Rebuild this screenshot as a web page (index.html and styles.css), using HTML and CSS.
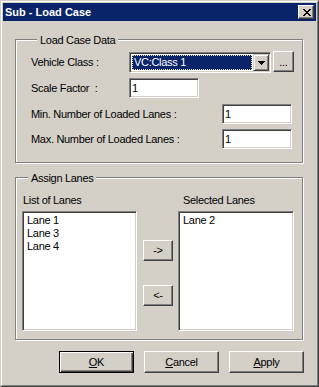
FILE: index.html
```html
<!DOCTYPE html>
<html>
<head>
<meta charset="utf-8">
<title>Sub - Load Case</title>
<link rel="stylesheet" href="styles.css">
</head>
<body>
<div class="window">
  <div class="frame">
    <div class="titlebar">
      <span class="title">Sub - Load Case</span>
      <span class="close">
        <svg width="8" height="7" viewBox="0 0 8 7" shape-rendering="crispEdges"><path fill="#000" d="M0 0h2v1h-2z M6 0h2v1h-2z M1 1h2v1h-2z M5 1h2v1h-2z M2 2h4v1h-4z M3 3h2v1h-2z M2 4h4v1h-4z M1 5h2v1h-2z M5 5h2v1h-2z M0 6h2v1h-2z M6 6h2v1h-2z"/></svg>
      </span>
    </div>
    <div class="content">
      <div class="group g1">
        <span class="legend">Load Case Data</span>
        <div class="row r1">
          <span class="lbl">Vehicle Class :</span>
          <div class="combo">
            <span class="combo-value"><span class="sel">VC:Class 1</span></span>
            <span class="combo-btn">
              <svg width="7" height="4" viewBox="0 0 7 4" shape-rendering="crispEdges"><path fill="#000" d="M0 0h7v1h-7z M1 1h5v1h-5z M2 2h3v1h-3z M3 3h1v1h-1z"/></svg>
            </span>
          </div>
          <span class="btn dots">...</span>
        </div>
        <div class="row r2">
          <span class="lbl">Scale Factor&nbsp;&nbsp;:</span>
          <span class="field">1</span>
        </div>
        <div class="row r3 wide">
          <span class="lbl">Min. Number of Loaded Lanes :</span>
          <span class="field">1</span>
        </div>
        <div class="row r4 wide">
          <span class="lbl">Max. Number of Loaded Lanes :</span>
          <span class="field">1</span>
        </div>
      </div>
      <div class="group g2">
        <span class="legend">Assign Lanes</span>
        <div class="lanes">
          <span class="cap cap-left">List of Lanes</span>
          <span></span>
          <span class="cap cap-right">Selected Lanes</span>
          <div class="listbox">
            <div class="item">Lane 1</div>
            <div class="item">Lane 3</div>
            <div class="item">Lane 4</div>
          </div>
          <div class="movers">
            <span class="btn mv">-&gt;</span>
            <span class="btn mv">&lt;-</span>
          </div>
          <div class="listbox">
            <div class="item">Lane 2</div>
          </div>
        </div>
      </div>
      <div class="buttons">
        <span class="btn act default"><u>O</u>K</span>
        <span class="btn act"><u>C</u>ancel</span>
        <span class="btn act"><u>A</u>pply</span>
      </div>
    </div>
  </div>
</div>
</body>
</html>
```
FILE: styles.css
```css
* { box-sizing: border-box; }
html, body { margin: 0; padding: 0; }
body {
  background: #d4d0c8;
  font-family: "Liberation Sans", Arial, sans-serif;
  font-size: 11px;
  line-height: 13px;
  letter-spacing: -0.3px;
  color: #000;
}
.window {
  width: 319px;
  height: 387px;
  border: 1px solid;
  border-color: #d4d0c8 #404040 #404040 #d4d0c8;
  background: #d4d0c8;
}
.frame {
  height: 100%;
  border: 1px solid;
  border-color: #fff #808080 #808080 #fff;
  padding: 1px;
  display: flex;
  flex-direction: column;
}
.titlebar {
  height: 18px;
  flex: none;
  background: #0a246a;
  display: flex;
  align-items: flex-start;
  justify-content: space-between;
  padding: 0 2px 0 2px;
}
.title {
  color: #fff;
  font-weight: bold;
  font-size: 11px;
  line-height: 13px;
  letter-spacing: 0;
  margin-top: 3px;
}
.close {
  width: 16px;
  height: 14px;
  margin-top: 2px;
  background: #d4d0c8;
  border: 1px solid;
  border-color: #fff #404040 #404040 #fff;
  box-shadow: inset -1px -1px #808080;
  display: flex;
  align-items: center;
  justify-content: center;
  padding-left: 1px;
}
.close svg { display: block; }
.content {
  flex: 1;
  display: flex;
  flex-direction: column;
  padding: 0 13px 0 12px;
}
.group {
  border: 1px solid #808080;
  box-shadow: inset 1px 1px #fff, 1px 1px #fff;
  display: flex;
  flex-direction: column;
}
.legend {
  align-self: flex-start;
  margin: -6px 0 0 6px;
  padding: 0 3px;
  background: #d4d0c8;
  white-space: nowrap;
}
.g1 {
  margin-top: 18px;
  padding: 0 0 13px 15px;
}
.row {
  display: flex;
  align-items: center;
  height: 20px;
}
.lbl { width: 98px; flex: none; white-space: pre; }
.row.wide .lbl { width: 191px; }
.r1 { margin-top: 4px; height: 22px; align-items: flex-start; }
.r1 .lbl { margin-top: 5px; }
.r2 { margin-top: 5px; }
.r3 { margin-top: 6px; }
.r4 { margin-top: 5px; }
.combo {
  width: 142px;
  height: 21px;
  margin-top: 1px;
  background: #fff;
  border: 1px solid;
  border-color: #808080 #fff #fff #808080;
  box-shadow: inset 1px 1px #404040, inset -1px -1px #d4d0c8;
  padding: 1px;
  display: flex;
}
.combo-value {
  flex: 1;
  padding: 1px;
  display: flex;
}
.sel {
  flex: 1;
  background: #0a246a;
  color: #fff;
  border: 1px dotted #e8e4b0;
  line-height: 13px;
  padding-left: 1px;
}
.combo-btn {
  width: 16px;
  height: 17px;
  background: #d4d0c8;
  border: 1px solid;
  border-color: #d4d0c8 #404040 #404040 #d4d0c8;
  box-shadow: inset 1px 1px #fff, inset -1px -1px #808080;
  display: flex;
  align-items: center;
  justify-content: center;
}
.combo-btn svg { display: block; }
.btn {
  background: #d4d0c8;
  border: 1px solid;
  border-color: #fff #404040 #404040 #fff;
  box-shadow: inset -1px -1px #808080;
  display: flex;
  align-items: center;
  justify-content: center;
  white-space: nowrap;
}
.dots {
  width: 21px;
  height: 21px;
  margin-left: 2px;
  padding-top: 2px;
}
.field {
  width: 70px;
  height: 20px;
  background: #fff;
  border: 1px solid;
  border-color: #808080 #fff #fff #808080;
  box-shadow: inset 1px 1px #404040, inset -1px -1px #d4d0c8;
  padding: 2px 0 0 2px;
  line-height: 14px;
}
.g2 {
  margin-top: 14px;
  padding: 0 0 8px 6px;
}
.lanes {
  margin-top: 9px;
  display: grid;
  grid-template-columns: 115px 30px 116px;
  grid-template-rows: 13px 120px;
  column-gap: 6px;
  row-gap: 4px;
}
.lanes > :nth-child(3) { margin-left: -1px; }
.cap-left { margin-left: 1px; }
.cap-right { padding-left: 5px; }
.listbox {
  background: #fff;
  border: 1px solid;
  border-color: #808080 #fff #fff #808080;
  box-shadow: inset 1px 1px #404040, inset -1px -1px #d4d0c8;
  padding: 2px 2px 2px 4px;
}
.listbox:last-child { margin-left: -1px; width: 116px; }
.item { height: 13px; line-height: 13px; }
.movers {
  display: flex;
  flex-direction: column;
  padding-top: 29px;
  gap: 24px;
}
.mv { height: 21px; width: 30px; }
.buttons {
  margin-top: 11px;
  margin-right: -1px;
  display: flex;
  justify-content: flex-end;
  gap: 10px;
}
.act { width: 75px; height: 22px; }
.default {
  border: 1px solid #000;
  box-shadow: inset 1px 1px #fff, inset -1px -1px #404040, inset -2px -2px #808080;
}
u { text-decoration: underline; text-underline-offset: 1px; }
```
